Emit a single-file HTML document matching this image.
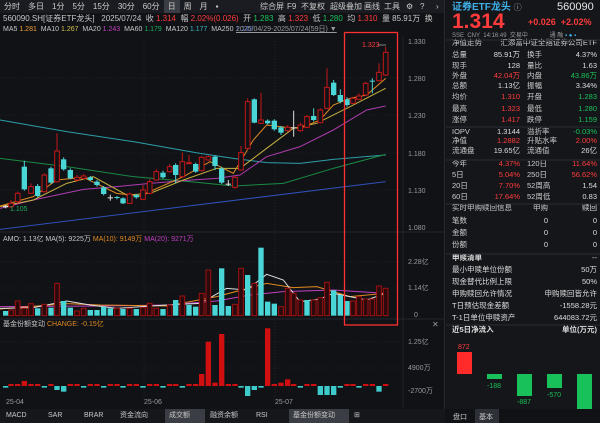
<!DOCTYPE html><html><head><meta charset="utf-8"><style>
*{margin:0;padding:0;box-sizing:border-box}
body{width:600px;height:423px;background:#111216;overflow:hidden;font-family:"Liberation Sans","Noto Sans CJK SC",sans-serif;color:#c8c8c8;font-size:8px;position:relative;line-height:1.15}
.a{position:absolute;white-space:nowrap}
.r{color:#ff3b3b}.g{color:#19c15a}.w{color:#e6e6e6}.gy{color:#9a9a9a}
.tb span{display:inline-block;padding:0 4px;line-height:13px;font-size:8px;color:#ccc}
</style></head><body>
<div class="a tb" style="left:0;top:0;width:445px;height:13px;background:#1b1c21">
<span>分时</span><span>多日</span><span>1分</span><span>5分</span><span>15分</span><span>30分</span><span>60分</span><span style="background:#3b3d45">日</span><span>周</span><span>月</span><span>▪</span>
<span style="position:absolute;left:256px">综合屏</span><span style="position:absolute;left:283px">F9</span><span style="position:absolute;left:297px">不复权</span><span style="position:absolute;left:326px">超级叠加</span><span style="position:absolute;left:360px">画线</span><span style="position:absolute;left:380px">工具</span><span style="position:absolute;left:402px">⚙</span><span style="position:absolute;left:416px">?</span><span style="position:absolute;left:432px">›</span></div>
<div class="a" style="left:3px;top:14px;font-size:8px">560090.SH[证券ETF龙头] &nbsp; 2025/07/24 &nbsp;收 <span class="r">1.314</span> &nbsp;幅 <span class="r">2.02%(0.026)</span> &nbsp;开 <span class="g">1.283</span> &nbsp;高 <span class="r">1.323</span> &nbsp;低 <span class="g">1.280</span> &nbsp;均 <span class="r">1.310</span> &nbsp;量 85.91万 &nbsp;换</div>
<div class="a" style="left:3px;top:26px;font-size:7px">MA5 <span style="color:#f0a030">1.281</span> &nbsp;MA10 <span style="color:#d6c24a">1.267</span> &nbsp;MA20 <span style="color:#c040c0">1.243</span> &nbsp;MA60 <span style="color:#1cae5a">1.179</span> &nbsp;MA120 <span style="color:#3cb4c4">1.177</span> &nbsp;MA250 <span style="color:#4060d0">1.142</span></div>
<div class="a gy" style="left:236px;top:26px;font-size:7px;text-decoration:underline">2025/04/29-2025/07/24(59日) ▼</div>
<svg class="a" style="left:0;top:0" width="445" height="423">
<g stroke="#2a2c33" stroke-dasharray="1,2" stroke-width="0.6">
<line x1="0" y1="78" x2="403" y2="78"/><line x1="0" y1="115" x2="403" y2="115"/><line x1="0" y1="153" x2="403" y2="153"/><line x1="0" y1="190" x2="403" y2="190"/>
<line x1="144" y1="38" x2="144" y2="400"/><line x1="275" y1="38" x2="275" y2="400"/>
<line x1="0" y1="262" x2="403" y2="262"/><line x1="0" y1="288" x2="403" y2="288"/>
<line x1="0" y1="342" x2="403" y2="342"/><line x1="0" y1="368" x2="403" y2="368"/>
</g>
<line x1="403" y1="36" x2="403" y2="408" stroke="#2a2c33" stroke-width="0.6"/>
<line x1="444.5" y1="0" x2="444.5" y2="423" stroke="#2a2c33"/>
<line x1="0" y1="232" x2="445" y2="232" stroke="#25262c"/>
<line x1="0" y1="319" x2="445" y2="319" stroke="#25262c"/>
<g font-size="7" fill="#9a9a9a"><text x="408" y="44">1.330</text><text x="408" y="81">1.280</text><text x="408" y="118">1.230</text><text x="408" y="156">1.180</text><text x="408" y="193">1.130</text><text x="408" y="230">1.080</text>
<text x="408" y="264">2.28亿</text><text x="408" y="290">1.14亿</text><text x="414" y="317">0</text>
<text x="408" y="344">1.25亿</text><text x="408" y="370">4900万</text><text x="408" y="393">-2700万</text>
<text x="6" y="404">25-04</text><text x="144" y="404">25-06</text><text x="275" y="404">25-07</text></g>
<g transform="translate(0,40) scale(0.33333)" fill="none" stroke-width="3">
<polyline stroke="#3050b8" points="0,568 1157,425"/>
<polyline stroke="#2e9eaa" points="0,240 200,275 400,305 600,340 700,355 800,368 900,370 1000,358 1157,345"/>
<polyline stroke="#1a8a45" points="0,355 200,380 400,410 600,428 700,438 850,430 1000,385 1157,343"/>
<polyline stroke="#b03cb0" points="0,505 100,480 250,448 350,440 450,430 550,422 650,415 720,405 800,350 900,320 1000,270 1100,210 1157,198"/>
<polyline stroke="#c8b040" points="0,500 100,480 200,430 280,410 380,465 450,460 550,420 650,385 720,385 800,325 880,265 950,250 1050,200 1157,145"/>
<polyline stroke="#e08a20" points="0,498 100,470 170,420 250,412 350,460 420,468 550,410 630,365 700,400 760,300 800,255 860,262 900,265 960,240 1000,195 1050,175 1100,165 1157,115"/>
<g id="c"></g>
</g>
<g id="v" transform="translate(0,225) scale(0.33333)"></g>
<g id="f" transform="translate(0,310) scale(0.33333)"></g>
<text x="10" y="211" font-size="7" fill="#1cae5a">1.105</text>
<text x="362" y="47" font-size="7" fill="#ff3b3b">1.323</text><line x1="378" y1="45" x2="386" y2="45" stroke="#ccc" stroke-width="0.6"/>
<rect x="344.5" y="32.5" width="53" height="292.5" fill="none" stroke="#ff3030" stroke-width="1.3"/>
</svg>
<div class="a" style="left:3px;top:236px;font-size:7px">AMO: 1.13亿 MA(5): 9225万 <span style="color:#e08a20">MA(10): 9149万</span> <span style="color:#c040c0">MA(20): 9271万</span></div>
<div class="a" style="left:3px;top:321px;font-size:7px">基金份额变动 <span style="color:#e08a20">CHANGE: -0.15亿</span></div>
<div class="a gy" style="left:432px;top:320px;font-size:8px">✕</div>
<div class="a" style="left:0;top:409px;width:445px;height:14px;background:#16171b;font-size:7px;line-height:14px">
<span class="a" style="left:6px">MACD</span><span class="a" style="left:48px">SAR</span><span class="a" style="left:84px">BRAR</span><span class="a" style="left:120px">资金流向</span><span class="a" style="left:165px;width:40px;background:#3b3d45;padding-left:4px">成交额</span><span class="a" style="left:210px">融资余额</span><span class="a" style="left:256px">RSI</span><span class="a" style="left:289px;width:60px;background:#3b3d45;padding-left:4px">基金份额变动</span><span class="a" style="left:354px">⊞</span></div>

<div class="a" style="left:446px;top:0;width:154px;height:423px;background:#15161a"></div>
<div class="a" style="left:452px;top:2px;font-size:10px;line-height:11px;font-weight:bold;color:#3fb0e8">证券ETF龙头 <span style="font-weight:normal;color:#aaa;font-size:8px">ⓘ</span></div>
<div class="a w" style="left:557px;top:1px;font-size:11px;line-height:12px">560090</div>
<div class="a r" style="left:452px;top:12px;font-size:21px;line-height:20px;font-weight:bold">1.314</div>
<div class="a r" style="left:528px;top:17px;font-size:9px;line-height:10px;font-weight:bold">+0.026 &nbsp;+2.02%</div>
<div class="a gy" style="left:452px;top:33px;font-size:6px;line-height:7px">SSE &nbsp;CNY &nbsp;14:16:49 &nbsp;交易中 <span style="margin-left:20px">通 融 <span style="color:#3fb0e8">▪ ● ▪</span></span></div>
<div id="rt"></div>
<svg class="a" style="left:446px;top:0" width="154" height="423">
<g stroke="#2a2c33"><line x1="0" y1="40" x2="154" y2="40"/><line x1="0" y1="127" x2="154" y2="127"/><line x1="0" y1="160" x2="154" y2="160"/><line x1="0" y1="204" x2="154" y2="204"/><line x1="0" y1="254" x2="154" y2="254"/><line x1="0" y1="325" x2="154" y2="325"/></g>
<rect x="11" y="352" width="15" height="22" fill="#ff2a2a"/>
<rect x="41" y="374" width="15" height="5" fill="#19c15a"/>
<rect x="71" y="374" width="15" height="22" fill="#19c15a"/>
<rect x="101" y="374" width="15" height="14" fill="#19c15a"/>
<rect x="131" y="374" width="15" height="35" fill="#19c15a"/>
<g font-size="7"><text x="12" y="349" fill="#ff3b3b">872</text><text x="41" y="388" fill="#19c15a">-188</text><text x="71" y="404" fill="#19c15a">-887</text><text x="101" y="397" fill="#19c15a">-570</text></g>
<rect x="0" y="409" width="154" height="14" fill="#111216"/><rect x="29" y="409" width="24" height="14" fill="#2e3038"/>
<text x="7" y="419" font-size="7" fill="#ccc">盘口</text><text x="33" y="419" font-size="7" fill="#ccc">基本</text>
</svg>
<script>
var C=[[17,498,502,495,505,'x'],[33,490,500,480,505,'r'],[53,460,485,455,490,'r'],[73,380,448,362,452,'c'],[93,440,460,430,462,'r'],[113,438,468,432,472,'c'],[133,405,455,400,458,'r'],[153,385,428,380,432,'c'],[171,333,425,280,428,'r'],[191,358,388,352,392,'c'],[211,390,415,385,418,'c'],[231,412,420,405,425,'r'],[251,408,415,402,418,'r'],[271,412,420,408,424,'c'],[291,425,435,420,440,'c'],[311,442,462,438,466,'c'],[331,472,473,464,482,'x'],[351,471,474,468,478,'c'],[369,475,490,472,492,'c'],[389,462,490,458,492,'r'],[409,465,472,462,476,'c'],[429,450,478,435,480,'r'],[449,425,460,418,462,'r'],[469,395,420,388,422,'r'],[489,398,412,392,416,'c'],[509,380,395,372,398,'r'],[527,375,405,370,430,'c'],[547,365,410,338,412,'r'],[567,368,370,345,372,'r'],[587,372,395,368,398,'c'],[605,352,392,348,395,'r'],[625,350,360,346,362,'r'],[645,350,378,346,390,'c'],[665,385,428,380,432,'c'],[685,431,433,420,438,'x'],[705,412,442,408,446,'r'],[723,338,390,318,392,'r'],[743,185,325,175,330,'r'],[763,178,248,175,250,'c'],[783,240,250,158,252,'r'],[803,242,250,238,254,'c'],[823,242,268,238,272,'c'],[843,262,278,258,285,'c'],[863,262,272,255,275,'r'],[881,262,264,212,290,'x'],[901,255,272,248,275,'r'],[921,230,262,225,265,'r'],[941,228,240,205,244,'c'],[961,210,248,205,250,'r'],[981,142,205,85,208,'r'],[1001,128,165,120,168,'c'],[1021,165,185,148,190,'c'],[1041,178,195,172,200,'c'],[1059,175,190,170,192,'r'],[1077,168,178,160,180,'r'],[1097,130,165,125,168,'r'],[1117,122,125,115,160,'c'],[1137,97,122,70,124,'r'],[1157,37,105,20,108,'r']];
var h='';C.forEach(function(c){var col=c[5]=='r'?'#c41818':c[5]=='c'?'#4ad6d6':'#ddd';h+='<line x1="'+c[0]+'" y1="'+c[3]+'" x2="'+c[0]+'" y2="'+c[4]+'" stroke="'+col+'" stroke-width="3"/>';var t=Math.max(c[2]-c[1],3);if(c[5]=='r')h+='<rect x="'+(c[0]-7)+'" y="'+c[1]+'" width="14" height="'+t+'" fill="#111216" stroke="#c41818" stroke-width="3"/>';else h+='<rect x="'+(c[0]-8)+'" y="'+c[1]+'" width="16" height="'+t+'" fill="'+col+'"/>';});
document.getElementById('c').innerHTML=h;
var V=[[258,'c'],[255,'r'],[228,'r'],[250,'r'],[236,'r'],[250,'c'],[238,'r'],[248,'c'],[175,'r'],[228,'c'],[248,'c'],[258,'r'],[250,'r'],[255,'c'],[255,'c'],[245,'c'],[250,'c'],[250,'r'],[252,'c'],[250,'r'],[252,'c'],[248,'r'],[235,'r'],[250,'r'],[252,'c'],[240,'r'],[225,'c'],[213,'r'],[240,'c'],[245,'c'],[205,'r'],[135,'r'],[240,'c'],[130,'c'],[243,'c'],[238,'r'],[130,'r'],[150,'c'],[175,'r'],[68,'c'],[230,'c'],[236,'c'],[245,'r'],[190,'r'],[205,'r'],[225,'r'],[225,'c'],[225,'r'],[218,'r'],[172,'r'],[196,'c'],[210,'c'],[228,'c'],[228,'r'],[215,'r'],[222,'r'],[222,'r'],[183,'r'],[190,'r']];
h='<polyline fill="none" stroke="#c040c0" stroke-width="3" points="0,245 300,243 500,240 650,228 750,210 850,200 1000,195 1157,205"/><polyline fill="none" stroke="#e08a20" stroke-width="3" points="0,252 200,236 300,240 500,243 650,215 800,175 880,188 950,185 1050,215 1157,205"/><polyline fill="none" stroke="#ddd" stroke-width="3" points="0,250 100,248 200,228 270,240 350,250 500,240 600,235 680,190 740,195 800,148 850,165 900,230 960,222 1000,205 1100,225 1157,205"/>';
V.forEach(function(v,i){var x=C[i][0];if(v[1]=='c')h+='<rect x="'+(x-8)+'" y="'+v[0]+'" width="16" height="'+(272-v[0])+'" fill="#4ad6d6"/>';else h+='<rect x="'+(x-7)+'" y="'+v[0]+'" width="14" height="'+(272-v[0])+'" fill="#2a0a0c" stroke="#a01010" stroke-width="3"/>';});
document.getElementById('v').innerHTML=h;
var F={73:213,171:-240,191:-245,605:192,625:95,645:218,665:72,743:-258,763:-240,803:55,843:218,863:208,961:-255,981:-255,1001:-255,1137:-245,223:222,543:-238,465:-238,253:222};
h='';C.forEach(function(c,i){var x=c[0],v=F[x];if(v===undefined){v=(i%3==0)?-233:222;}if(v>0)h+='<rect x="'+(x-8)+'" y="'+v+'" width="16" height="'+(228-v)+'" fill="#d01010"/>';else h+='<rect x="'+(x-8)+'" y="228" width="16" height="'+(-v-228)+'" fill="#3ccaca"/>';});
document.getElementById('f').innerHTML=h;
var R=[[45,'净值走势','','汇添富中证全指证券公司ETF','',1],[57,'总量','85.91万','换手','4.37%'],[68,'现手','128','量比','1.63'],[78,'外盘','r42.04万','内盘','g43.86万'],[88,'总额','1.13亿','振幅','3.34%'],[99,'均价','r1.310','开盘','g1.283'],[111,'最高','r1.323','最低','g1.280'],[122,'涨停','r1.417','跌停','g1.159'],[134,'IOPV','1.3144','溢折率','g-0.03%'],[143,'净值','r1.2882','升贴水率','r2.00%'],[153,'流通盘','19.65亿','流通值','26亿'],[166,'今年','r4.37%','120日','r11.64%'],[177,'5日','r5.04%','250日','r56.62%'],[188,'20日','r7.70%','52周高','1.54'],[199,'60日','r17.64%','52周低','0.83'],[210,'实时申购赎回信息','','申购','赎回'],[223,'笔数','','0','0'],[235,'金额','','0','0'],[247,'份额','','0','0']];
h='';function s(v){if(!v)return['',''];if(v[0]=='r')return['#ff3b3b',v.slice(1)];if(v[0]=='g')return['#19c15a',v.slice(1)];return['#ddd',v];}
R.forEach(function(r){var y=r[0]-6;h+='<div class="a" style="left:452px;top:'+y+'px;font-size:7.5px;color:#ccc">'+r[1]+'</div>';var a=s(r[2]);if(a[1])h+='<div class="a" style="right:80px;top:'+y+'px;font-size:7.5px;color:'+a[0]+'">'+a[1]+'</div>';
if(r[4]===''&&r[5]){h+='<div class="a" style="right:3px;top:'+y+'px;font-size:7.5px;color:#ccc">'+r[3]+'</div>';return;}
if(r[2]===''&&r[1].length<3){h+='<div class="a" style="right:52px;top:'+y+'px;font-size:7.5px;color:#ddd">'+r[3]+'</div>';}else if(r[2]===''){h+='<div class="a" style="left:533px;top:'+y+'px;font-size:7.5px;color:#ccc">'+r[3]+'</div>';}else h+='<div class="a" style="left:527px;top:'+y+'px;font-size:7.5px;color:#ccc">'+r[3]+'</div>';
var b=s(r[4]);h+='<div class="a" style="right:3px;top:'+y+'px;font-size:7.5px;color:'+b[0]+'">'+b[1]+'</div>';});
var Q=[[260,'<b>申赎清单</b>','--'],[272,'最小申赎单位份额','50万'],[284,'现金替代比例上限','50%'],[296,'申购赎回允许情况','申购赎回皆允许'],[308,'T日预估现金差额','-1558.28元'],[320,'T-1日单位申赎资产','644083.72元'],[332,'<b>近5日净流入</b>','<b>单位(万元)</b>']];
Q.forEach(function(q){var y=q[0]-6;h+='<div class="a" style="left:452px;top:'+y+'px;font-size:7.5px;color:#ddd">'+q[1]+'</div><div class="a" style="right:3px;top:'+y+'px;font-size:7.5px;color:#ddd">'+q[2]+'</div>';});
document.getElementById('rt').innerHTML=h;
</script>
</body></html>
